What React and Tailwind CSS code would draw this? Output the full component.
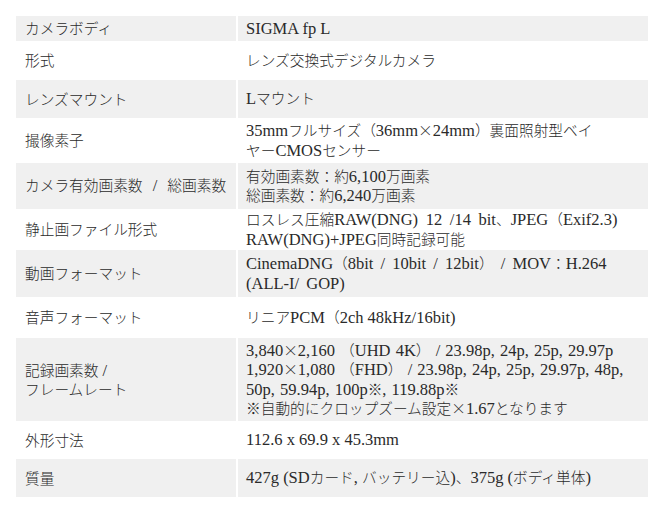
import React from 'react';

// 日本語部分と欧文部分でサイズを変える（参照画像は欧文が少し大きい）
const CJK = /([\u3000-\u303f\u3040-\u30ff\u4e00-\u9fff\uff00-\uffef※×、]+)/;

function Mixed({ text }) {
    return text.split(CJK).filter(Boolean).map((part, i) =>
        CJK.test(part) ? (
            <span key={i} className="font-['Noto_Sans_CJK_JP',sans-serif] text-[14.7px] font-light">{part}</span>
        ) : (
            <span key={i} className="font-['Liberation_Serif',serif] text-[16.5px]">{part}</span>
        )
    );
}

const specs = [
    { label: ['カメラボディ'], value: ['SIGMA fp L'], h: 'h-[25px]' },
    { label: ['形式'], value: ['レンズ交換式デジタルカメラ'], h: 'h-[39px]' },
    { label: ['レンズマウント'], value: ['Lマウント'], h: 'h-[38px]' },
    { label: ['撮像素子'], value: ['35mmフルサイズ（36mm×24mm）裏面照射型ベイ', 'ヤーCMOSセンサー'], h: 'h-[45px]' },
    { label: ['カメラ有効画素数 / 総画素数'], labelWs: '[word-spacing:6px]', value: ['有効画素数：約6,100万画素', '総画素数：約6,240万画素'], h: 'h-[46px]' },
    { label: ['静止画ファイル形式'], value: ['ロスレス圧縮RAW(DNG) 12 /14 bit、JPEG（Exif2.3)', 'RAW(DNG)+JPEG同時記録可能'], valueWs: '[word-spacing:3.5px]', h: 'h-[41px]' },
    { label: ['動画フォーマット'], value: ['CinemaDNG（8bit / 10bit / 12bit） / MOV：H.264', '(ALL-I/ GOP)'], valueWs: '[word-spacing:3px]', h: 'h-[47px]' },
    { label: ['音声フォーマット'], value: ['リニアPCM（2ch 48kHz/16bit)'], h: 'h-[41px]' },
    {
        label: ['記録画素数 /', 'フレームレート'],
        value: [
            '3,840×2,160 （UHD 4K） / 23.98p, 24p, 25p, 29.97p',
            '1,920×1,080 （FHD） / 23.98p, 24p, 25p, 29.97p, 48p,',
            '50p, 59.94p, 100p※, 119.88p※',
            '※自動的にクロップズーム設定×1.67となります',
        ],
        valueWs: '[word-spacing:1px]',
        h: 'h-[83px]',
    },
    { label: ['外形寸法'], value: ['112.6 x 69.9 x 45.3mm'], h: 'h-[38px]' },
    { label: ['質量'], value: ['427g (SDカード, バッテリー込)、375g (ボディ単体)'], h: 'h-[38px]' },
];

function Lines({ lines }) {
    return lines.map((line, i) => (
        <div key={i} className="whitespace-nowrap">
            <Mixed text={line} />
        </div>
    ));
}

export default function App() {
    return (
        <div className="w-[664px] h-[505px] bg-white pt-[16px] px-[16px] text-[#2a2a2a] leading-[18.5px]">
            <div className="flex flex-col">
                {specs.map((row, i) => {
                    const bg = i % 2 === 0 ? 'bg-[#f0f0f0]' : 'bg-white';
                    return (
                        <div key={i} className={`flex gap-[2px] ${row.h}`}>
                            <div className={`w-[220px] shrink-0 flex flex-col justify-center pl-[9px] ${bg} ${row.labelWs || ''}`}>
                                <Lines lines={row.label} />
                            </div>
                            <div className={`flex-1 flex flex-col justify-center pl-[8px] ${bg} ${row.valueWs || ''}`}>
                                <Lines lines={row.value} />
                            </div>
                        </div>
                    );
                })}
            </div>
        </div>
    );
}
